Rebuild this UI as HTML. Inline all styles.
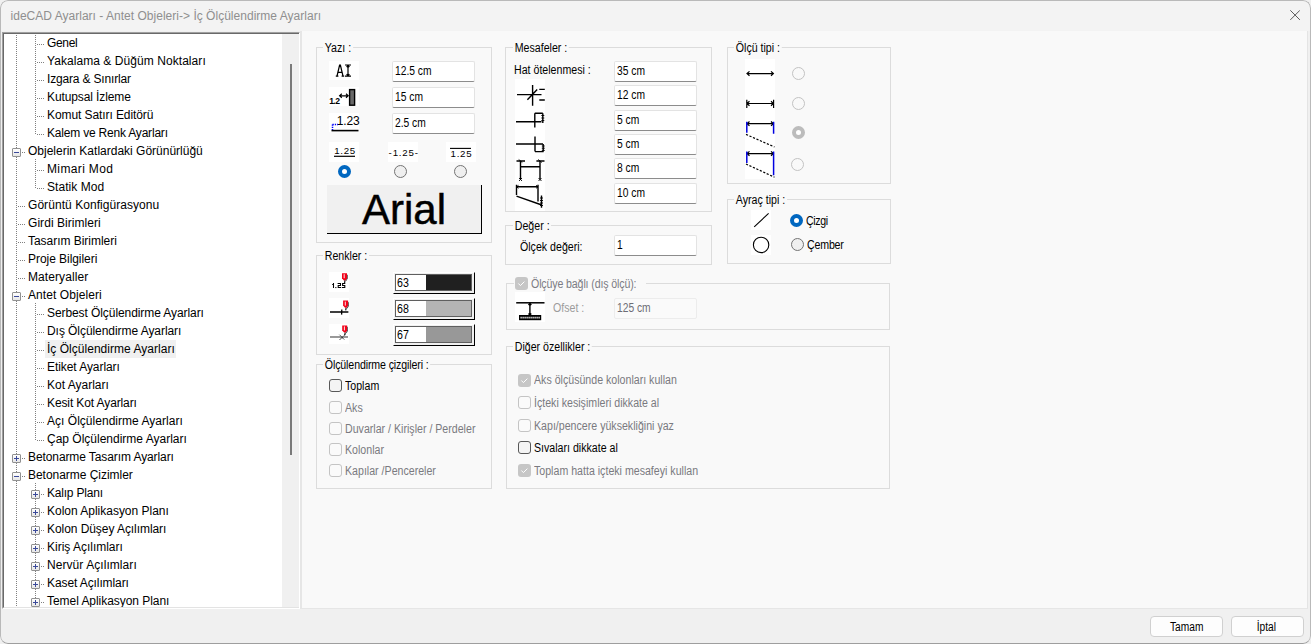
<!DOCTYPE html>
<html><head><meta charset="utf-8"><title>ideCAD</title>
<style>
*{box-sizing:border-box;margin:0;padding:0}
html,body{width:1311px;height:644px;overflow:hidden;background:#f0f0f0}
body{font-family:"Liberation Sans",sans-serif;font-size:11px;color:#000;position:relative}
#win{position:absolute;left:0;top:0;width:1311px;height:644px;background:#f0f0f0;border-radius:8px;overflow:hidden}
#win:after{content:"";position:absolute;left:0;top:0;right:0;bottom:0;border:1px solid #b9b9b9;border-bottom-color:#9e9e9e;border-radius:8px;pointer-events:none}
#tbar{position:absolute;left:0;top:0;width:1311px;height:31px;background:#f3f3f3}
#title{position:absolute;left:10.5px;top:9px;font-size:12px;color:#8f8f8f;white-space:nowrap;letter-spacing:0.02px}
#treeo{position:absolute;left:2px;top:32px;width:298px;height:577px;border-left:1px solid #a0a0a0;border-top:1px solid #a0a0a0;border-right:1px solid #fff;border-bottom:1px solid #fff}
#tree{position:absolute;left:0;top:0;width:296px;height:575px;background:#fff;border-left:1px solid #696969;border-top:1px solid #696969;border-right:0;border-bottom:1px solid #e3e3e3;overflow:hidden}
#treein{position:absolute;left:-4px;top:-34px;width:300px;height:640px}
.ti{position:absolute;height:18px;line-height:18px;font-size:12px;white-space:nowrap;color:#000;padding:0 1px 0 2px;margin-left:-2px}
.ti.sel{background:#f0f0f0}
.hd{position:absolute;height:1px;background-image:linear-gradient(90deg,#808080 50%,transparent 50%);background-size:2px 1px}
.vd{position:absolute;width:1px;background-image:linear-gradient(180deg,#808080 50%,transparent 50%);background-size:1px 2px}
.eb{position:absolute;width:9px;height:9px;border:1px solid #919191;border-radius:1px;background:linear-gradient(#fff,#e6e6e6)}
.eb .h{position:absolute;left:1px;top:3px;width:5px;height:1px;background:#3b4a9a}
.eb .v{position:absolute;left:3px;top:1px;width:1px;height:5px;background:#3b4a9a}
#sb{position:absolute;left:282px;top:34px;width:17px;height:574px;background:#f0f0f0}
#thumb{position:absolute;left:290px;top:64px;width:2px;height:391px;background:#7a7a7a}
#panel{position:absolute;left:300px;top:31px;width:1008px;height:578px;background:#f9f9f9;border-left:2px solid #e6e6e6;border-right:1px solid #e4e4e4;border-bottom:1px solid #e6e6e6}
.gb{position:absolute;border:1px solid #dcdcdc}
.gl{position:absolute;background:#f9f9f9;padding:0 2px;height:13px;line-height:13px;white-space:nowrap;font-size:12px;transform:scaleX(.885);transform-origin:0 50%}
.t{position:absolute;white-space:nowrap;font-size:12px;line-height:13px;transform:scaleX(.885);transform-origin:0 50%}
.dis{color:#7a7a80}
.in{position:absolute;height:21px;background:#fff;border:1px solid #e3e3e3;border-bottom:1px solid #8c8c8c;border-radius:2px;font-size:12px;line-height:18px;padding-left:2px;white-space:nowrap}
.in span{display:inline-block;transform:scaleX(.855);transform-origin:0 50%}
.in.d{background:#fafafa;border:1px solid #ececec;color:#6d6d75}
.ic{position:absolute;background:#fff}
.rb{position:absolute;width:13px;height:13px;border-radius:50%;border:1px solid #747474;background:#efefef}
.rb.on{border:4px solid #0067c0;background:#fff}
.rb.d{border-color:#c3c3c3;background:#f9f9f9}
.rb.don{border:4px solid #bcbcbc;background:#fff}
.cb{position:absolute;width:13px;height:13px;border-radius:3px;border:1px solid #585858;background:#f4f4f4}
.cb.d{border-color:#c4c4c4;background:#fafafa}
.cb.dc{border:none;background:#c6c6c6}
.cw{position:absolute;width:82px;height:22px;background:#f0f0f0;border-top:1px solid #fff;border-left:1px solid #fff;border-right:1px solid #000;border-bottom:1px solid #000}
.ci{position:absolute;left:1px;top:1px;width:77px;height:17px;border:1px solid #5f5f5f;background:#fff;font-size:12px;line-height:16px;padding-left:1px;white-space:nowrap}
.ci span{display:inline-block;transform:scaleX(.885);transform-origin:0 50%}
.ci i{position:absolute;left:30px;top:0;width:45px;height:15px}
.btn{position:absolute;height:21px;background:#fdfdfd;border:1px solid #d0d0d0;border-radius:4px;text-align:center;font-size:12px;line-height:20px}
.btn span{display:inline-block;transform:scaleX(.85)}
</style></head><body><div id="win">
<div id="tbar"></div>
<div id="title">ideCAD Ayarları - Antet Objeleri-&gt; İç Ölçülendirme Ayarları</div>
<svg style="position:absolute;left:1290px;top:10px" width="10" height="10" viewBox="0 0 10 10"><path d="M0.3 0.3L9.9 9.9M9.9 0.3L0.3 9.9" stroke="#5a5a5a" stroke-width="1" fill="none"/></svg>
<div id="treeo"><div id="tree"><div id="treein">
<div class="vd" style="left:16px;top:35px;height:573px"></div>
<div class="vd" style="left:35px;top:35px;height:100px"></div>
<div class="vd" style="left:35px;top:159px;height:30px"></div>
<div class="vd" style="left:35px;top:303px;height:138px"></div>
<div class="vd" style="left:35px;top:483px;height:125px"></div>
<div id="sb"></div><div id="thumb"></div>
<div class="ti" style="left:47px;top:34px;letter-spacing:-0.346px">Genel</div>
<div class="hd" style="left:37px;top:44px;width:8px"></div>
<div class="ti" style="left:47px;top:52px;letter-spacing:0.062px">Yakalama & Düğüm Noktaları</div>
<div class="hd" style="left:37px;top:62px;width:8px"></div>
<div class="ti" style="left:47px;top:70px;letter-spacing:-0.171px">Izgara & Sınırlar</div>
<div class="hd" style="left:37px;top:80px;width:8px"></div>
<div class="ti" style="left:47px;top:88px;letter-spacing:-0.106px">Kutupsal İzleme</div>
<div class="hd" style="left:37px;top:98px;width:8px"></div>
<div class="ti" style="left:47px;top:106px;letter-spacing:-0.087px">Komut Satırı Editörü</div>
<div class="hd" style="left:37px;top:116px;width:8px"></div>
<div class="ti" style="left:47px;top:124px;letter-spacing:-0.199px">Kalem ve Renk Ayarları</div>
<div class="hd" style="left:37px;top:134px;width:8px"></div>
<div class="ti" style="left:28px;top:142px;letter-spacing:0.001px">Objelerin Katlardaki Görünürlüğü</div>
<div class="hd" style="left:18px;top:152px;width:8px"></div>
<div class="eb" style="left:12px;top:148px"><i class="h"></i></div>
<div class="ti" style="left:47px;top:160px;letter-spacing:0.363px">Mimari Mod</div>
<div class="hd" style="left:37px;top:170px;width:8px"></div>
<div class="ti" style="left:47px;top:178px;letter-spacing:0.06px">Statik Mod</div>
<div class="hd" style="left:37px;top:188px;width:8px"></div>
<div class="ti" style="left:28px;top:196px;letter-spacing:0.055px">Görüntü Konfigürasyonu</div>
<div class="hd" style="left:18px;top:206px;width:8px"></div>
<div class="ti" style="left:28px;top:214px;letter-spacing:0.053px">Girdi Birimleri</div>
<div class="hd" style="left:18px;top:224px;width:8px"></div>
<div class="ti" style="left:28px;top:232px;letter-spacing:-0.032px">Tasarım Birimleri</div>
<div class="hd" style="left:18px;top:242px;width:8px"></div>
<div class="ti" style="left:28px;top:250px;letter-spacing:-0.049px">Proje Bilgileri</div>
<div class="hd" style="left:18px;top:260px;width:8px"></div>
<div class="ti" style="left:28px;top:268px;letter-spacing:0.086px">Materyaller</div>
<div class="hd" style="left:18px;top:278px;width:8px"></div>
<div class="ti" style="left:28px;top:286px;letter-spacing:0.078px">Antet Objeleri</div>
<div class="hd" style="left:18px;top:296px;width:8px"></div>
<div class="eb" style="left:12px;top:292px"><i class="h"></i></div>
<div class="ti" style="left:47px;top:304px;letter-spacing:-0.082px">Serbest Ölçülendirme Ayarları</div>
<div class="hd" style="left:37px;top:314px;width:8px"></div>
<div class="ti" style="left:47px;top:322px;letter-spacing:-0.061px">Dış Ölçülendirme Ayarları</div>
<div class="hd" style="left:37px;top:332px;width:8px"></div>
<div class="ti sel" style="left:47px;top:340px;letter-spacing:0.026px">İç Ölçülendirme Ayarları</div>
<div class="hd" style="left:37px;top:350px;width:8px"></div>
<div class="ti" style="left:47px;top:358px;letter-spacing:-0.068px">Etiket Ayarları</div>
<div class="hd" style="left:37px;top:368px;width:8px"></div>
<div class="ti" style="left:47px;top:376px;letter-spacing:-0.001px">Kot Ayarları</div>
<div class="hd" style="left:37px;top:386px;width:8px"></div>
<div class="ti" style="left:47px;top:394px;letter-spacing:-0.113px">Kesit Kot Ayarları</div>
<div class="hd" style="left:37px;top:404px;width:8px"></div>
<div class="ti" style="left:47px;top:412px;letter-spacing:0.025px">Açı Ölçülendirme Ayarları</div>
<div class="hd" style="left:37px;top:422px;width:8px"></div>
<div class="ti" style="left:47px;top:430px;letter-spacing:-0.002px">Çap Ölçülendirme Ayarları</div>
<div class="hd" style="left:37px;top:440px;width:8px"></div>
<div class="ti" style="left:28px;top:448px;letter-spacing:-0.096px">Betonarme Tasarım Ayarları</div>
<div class="hd" style="left:18px;top:458px;width:8px"></div>
<div class="eb" style="left:12px;top:454px"><i class="h"></i><i class="v"></i></div>
<div class="ti" style="left:28px;top:466px;letter-spacing:-0.032px">Betonarme Çizimler</div>
<div class="hd" style="left:18px;top:476px;width:8px"></div>
<div class="eb" style="left:12px;top:472px"><i class="h"></i></div>
<div class="ti" style="left:47px;top:484px;letter-spacing:-0.204px">Kalıp Planı</div>
<div class="hd" style="left:37px;top:494px;width:8px"></div>
<div class="eb" style="left:31px;top:490px"><i class="h"></i><i class="v"></i></div>
<div class="ti" style="left:47px;top:502px;letter-spacing:-0.013px">Kolon Aplikasyon Planı</div>
<div class="hd" style="left:37px;top:512px;width:8px"></div>
<div class="eb" style="left:31px;top:508px"><i class="h"></i><i class="v"></i></div>
<div class="ti" style="left:47px;top:520px;letter-spacing:-0.064px">Kolon Düşey Açılımları</div>
<div class="hd" style="left:37px;top:530px;width:8px"></div>
<div class="eb" style="left:31px;top:526px"><i class="h"></i><i class="v"></i></div>
<div class="ti" style="left:47px;top:538px;letter-spacing:-0.013px">Kiriş Açılımları</div>
<div class="hd" style="left:37px;top:548px;width:8px"></div>
<div class="eb" style="left:31px;top:544px"><i class="h"></i><i class="v"></i></div>
<div class="ti" style="left:47px;top:556px;letter-spacing:0.065px">Nervür Açılımları</div>
<div class="hd" style="left:37px;top:566px;width:8px"></div>
<div class="eb" style="left:31px;top:562px"><i class="h"></i><i class="v"></i></div>
<div class="ti" style="left:47px;top:574px;letter-spacing:-0.098px">Kaset Açılımları</div>
<div class="hd" style="left:37px;top:584px;width:8px"></div>
<div class="eb" style="left:31px;top:580px"><i class="h"></i><i class="v"></i></div>
<div class="ti" style="left:47px;top:592px;letter-spacing:-0.05px">Temel Aplikasyon Planı</div>
<div class="hd" style="left:37px;top:602px;width:8px"></div>
<div class="eb" style="left:31px;top:598px"><i class="h"></i><i class="v"></i></div></div></div></div>
<div id="panel"></div>
<!-- Yazi -->
<div class="gb" style="left:316px;top:47px;width:176px;height:196px"></div>
<div class="gl" style="left:323px;top:42px">Yazı :</div>
<div class="ic" style="left:329px;top:61px;width:30px;height:19px"></div>
<div class="ic" style="left:329px;top:87px;width:30px;height:19px"></div>
<div class="ic" style="left:329px;top:113px;width:30px;height:19px"></div>
<div class="in" style="left:392px;top:61px;width:83px"><span>12.5 cm</span></div>
<div class="in" style="left:392px;top:87px;width:83px"><span>15 cm</span></div>
<div class="in" style="left:392px;top:113px;width:83px"><span>2.5 cm</span></div>
<div class="ic" style="left:329px;top:142px;width:30px;height:20px"></div>
<div class="ic" style="left:388px;top:142px;width:30px;height:20px"></div>
<div class="ic" style="left:446px;top:142px;width:30px;height:20px"></div>
<div class="rb on" style="left:338px;top:165px"></div>
<div class="rb" style="left:394px;top:165px"></div>
<div class="rb" style="left:454px;top:165px"></div>
<div style="position:absolute;left:327px;top:185px;width:155px;height:49px;background:#f0f0f0;border-right:1px solid #000;border-bottom:1px solid #000;text-align:center;font-size:42px;line-height:49px;padding-right:0px;-webkit-text-stroke:0.45px #000">Arial</div>
<!-- Renkler -->
<div class="gb" style="left:316px;top:255px;width:176px;height:100px"></div>
<div class="gl" style="left:323px;top:250px">Renkler :</div>
<div class="ic" style="left:329px;top:272px;width:20px;height:20px"></div>
<div class="ic" style="left:329px;top:298px;width:20px;height:20px"></div>
<div class="ic" style="left:329px;top:324px;width:20px;height:20px"></div>
<div class="cw" style="left:393px;top:272px"><div class="ci"><span>63</span><i style="background:#202020"></i></div></div>
<div class="cw" style="left:393px;top:298px"><div class="ci"><span>68</span><i style="background:#b4b4b4"></i></div></div>
<div class="cw" style="left:393px;top:324px"><div class="ci"><span>67</span><i style="background:#989898"></i></div></div>
<!-- Olculendirme cizgileri -->
<div class="gb" style="left:316px;top:364px;width:176px;height:125px"></div>
<div class="gl" style="left:323px;top:359px;letter-spacing:-0.14px">Ölçülendirme çizgileri :</div>
<div class="cb" style="left:329px;top:379px"></div><div class="t" style="left:345px;top:380px">Toplam</div>
<div class="cb d" style="left:329px;top:401px"></div><div class="t dis" style="left:345px;top:402px">Aks</div>
<div class="cb d" style="left:329px;top:422px"></div><div class="t dis" style="left:345px;top:423px">Duvarlar / Kirişler / Perdeler</div>
<div class="cb d" style="left:329px;top:443px"></div><div class="t dis" style="left:345px;top:444px">Kolonlar</div>
<div class="cb d" style="left:329px;top:464px"></div><div class="t dis" style="left:345px;top:465px">Kapılar /Pencereler</div>
<!-- Mesafeler -->
<div class="gb" style="left:505px;top:47px;width:207px;height:165px"></div>
<div class="gl" style="left:513px;top:42px">Mesafeler :</div>
<div class="t" style="left:514px;top:64px">Hat ötelenmesi :</div>
<div class="in" style="left:614px;top:61px;width:83px"><span>35 cm</span></div>
<div class="in" style="left:614px;top:85px;width:83px"><span>12 cm</span></div>
<div class="in" style="left:614px;top:110px;width:83px"><span>5 cm</span></div>
<div class="in" style="left:614px;top:134px;width:83px"><span>5 cm</span></div>
<div class="in" style="left:614px;top:158px;width:83px"><span>8 cm</span></div>
<div class="in" style="left:614px;top:183px;width:83px"><span>10 cm</span></div>
<div class="ic" style="left:515px;top:79px;width:30px;height:132px"></div>
<!-- Deger -->
<div class="gb" style="left:505px;top:225px;width:207px;height:40px"></div>
<div class="gl" style="left:513px;top:220px">Değer :</div>
<div class="t" style="left:520px;top:241px">Ölçek değeri:</div>
<div class="in" style="left:614px;top:235px;width:83px"><span>1</span></div>
<!-- Olcuye bagli -->
<div class="gb" style="left:506px;top:283px;width:384px;height:47px"></div>
<div style="position:absolute;left:514px;top:280px;width:132px;height:8px;background:#f9f9f9"></div><div class="t dis" style="left:531px;top:278px;color:#7c7c84;letter-spacing:-0.15px">Ölçüye bağlı (dış ölçü):</div>
<div class="cb dc" style="left:515px;top:277px"></div>
<div class="ic" style="left:515px;top:292px;width:30px;height:30px"></div>
<div class="t dis" style="left:553px;top:302px;color:#9c9c9c">Ofset :</div>
<div class="in d" style="left:614px;top:298px;width:83px"><span>125 cm</span></div>
<!-- Diger ozellikler -->
<div class="gb" style="left:506px;top:346px;width:384px;height:143px"></div>
<div class="gl" style="left:513px;top:341px">Diğer özellikler :</div>
<div class="cb dc" style="left:518px;top:374px"></div><div class="t dis" style="left:534px;top:374px">Aks ölçüsünde kolonları kullan</div>
<div class="cb d" style="left:518px;top:396px"></div><div class="t dis" style="left:534px;top:397px">İçteki kesişimleri dikkate al</div>
<div class="cb d" style="left:518px;top:419px"></div><div class="t dis" style="left:534px;top:420px">Kapı/pencere yüksekliğini yaz</div>
<div class="cb" style="left:518px;top:441px"></div><div class="t" style="left:534px;top:442px">Sıvaları dikkate al</div>
<div class="cb dc" style="left:518px;top:464px"></div><div class="t dis" style="left:534px;top:465px">Toplam hatta içteki mesafeyi kullan</div>
<!-- Olcu tipi -->
<div class="gb" style="left:727px;top:47px;width:164px;height:137px"></div>
<div class="gl" style="left:734px;top:42px">Ölçü tipi :</div>
<div class="ic" style="left:745px;top:59px;width:30px;height:120px"></div>
<div class="rb d" style="left:792px;top:67px"></div>
<div class="rb d" style="left:792px;top:97px"></div>
<div class="rb don" style="left:792px;top:126px"></div>
<div class="rb d" style="left:791px;top:158px"></div>
<!-- Ayrac tipi -->
<div class="gb" style="left:727px;top:199px;width:164px;height:65px"></div>
<div class="gl" style="left:734px;top:194px">Ayraç tipi :</div>
<div class="ic" style="left:751px;top:210px;width:20px;height:20px"></div><div class="ic" style="left:751px;top:235px;width:20px;height:20px"></div>
<div class="rb on" style="left:790px;top:214px"></div><div class="t" style="left:806px;top:215px;letter-spacing:-0.4px">Çizgi</div>
<div class="rb" style="left:791px;top:238px"></div><div class="t" style="left:807px;top:239px;letter-spacing:-0.2px">Çember</div>
<svg style="position:absolute;left:0;top:0" width="1311" height="644" viewBox="0 0 1311 644" fill="none" stroke="#000" stroke-width="1.2" font-family="Liberation Sans, sans-serif">
<defs>
<pattern id="hat" width="2" height="2" patternUnits="userSpaceOnUse"><rect width="2" height="2" fill="#000"/><rect width="1" height="1" fill="#fff"/><rect x="1" y="1" width="1" height="1" fill="#fff"/></pattern>
<g id="pin" stroke="none"><path d="M0.2 0H5.2V5L3.9 7.2H2.1L0.2 5Z" fill="#f20018"/><rect x="1.9" y="1" width="0.9" height="4" fill="#fff"/><path d="M5.2 1.2L6 1.8V5.4L4.5 7.8L3.9 7.2L5.2 5Z" fill="#4a4a4a"/><path d="M3.2 7.2L2.8 9.8" stroke="#000" stroke-width="1.1"/></g>
</defs>
<!-- Yazi icon 1: A I-beam -->
<g stroke-width="1.25">
<path d="M337 76.2L339.6 65H340.4L343 76.2M338 72.4H342M335.8 76.2H338.4M341.6 76.2H344.2"/>
<path d="M348 65V76M345 65H351M345 76.2H351M346.6 67L348 65.4L349.4 67M346.6 74.2L348 75.8L349.4 74.2" stroke-width="1.2"/>
</g>
<!-- Yazi icon 2 -->
<g font-size="8.6" font-weight="bold" fill="#000" stroke="none"><text x="329.3" y="104.4">1</text><text x="333.3" y="104.4">.</text><text x="335.2" y="104.4">2</text></g>
<path d="M339.6 95.8H348.2M341.8 93.8L339.6 95.8L341.8 97.8M346 93.8L348.2 95.8L346 97.8" stroke-width="1.15"/>
<rect x="349.6" y="89.6" width="5" height="15.6" fill="#6a6a6a" stroke="#000" stroke-width="1.4"/>
<!-- Yazi icon 3 -->
<text x="336.8" y="125" font-size="12" fill="#000" stroke="none" letter-spacing="-0.2">1.23</text>
<path d="M331.5 130.6H358.5" stroke-width="1.6"/>
<path d="M332.5 124.5H338M332.5 124.5V130" stroke="#0000ff" stroke-width="1.5" stroke-dasharray="1.3 1"/>
<!-- 1.25 labels -->
<text transform="translate(334.2 154)" font-size="9.7" fill="#000" stroke="none" letter-spacing="0.7">1.25</text>
<path d="M334 156.3H355" stroke-width="1.2"/>
<text transform="translate(388.6 156)" font-size="9.7" fill="#000" stroke="none" letter-spacing="0.8">-1.25-</text>
<text transform="translate(450.6 157)" font-size="9.7" fill="#000" stroke="none" letter-spacing="0.7">1.25</text>
<path d="M450 148.4H471" stroke-width="1.1"/>
<!-- Renkler icons -->
<use href="#pin" x="341.8" y="273.2"/>
<path d="M333.5 283V288M332.2 284.5H333.5M337.6 283.5H340.5V285.5H338.2V287.5H341.2M345.3 283.5H342.6V285.5H344.8V287.5H342" stroke-width="1.05"/>
<rect x="335.3" y="287" width="1.1" height="1.1" fill="#000" stroke="none"/>
<use href="#pin" x="342.9" y="300.6"/>
<path d="M330 312H348.4M341.8 309.4L341.6 314.6" stroke-width="1.3"/>
<use href="#pin" x="342" y="325.4"/>
<path d="M330 337.4l1-.8 1 .8 1-.8 1 .8 1-.8 1 .8 1-.8 1 .8 1-.8 1 .8 1-.8 1 .8 1-.8 1 .8 1-.8 1 .8 1-.8 1 .8" stroke-width="0.8"/>
<path d="M339.5 340L345 334.5M339.5 334.8L344.6 339.9" stroke-width="1" stroke-dasharray="1 0.7"/>
<!-- Mesafeler icons -->
<g stroke-width="1.4">
<path d="M517 94.6H541.5M532.6 85V105.7M527.4 99.7L537.2 89.4M539.3 89.4H544.8M539.3 100H544.8"/>
<path d="M516 121.8H541.5M534.8 113.3V127.5M534.8 113.3H542.8M542.8 113.3V123"/>
<path d="M541.3 115.5H544.3M541.3 118H544.3M541.3 120.5H544.3" stroke-width="0.9"/>
<path d="M516 144H543M535 136.4V151.6M535 151.6H543.6M543.2 144V151.6"/>
<path d="M541.8 146H544.8M541.8 148.2H544.8M541.8 150.4H544.8" stroke-width="0.9"/>
<path d="M520.5 161V179.4M540 161V179.4M516.5 161H525M536.4 161H544.5M520.5 166.8H540"/>
<path d="M518.7 159.5L522.3 162.5M538.2 159.5L541.8 162.5M519 178L522 181M522 178L519 181M538.5 178L541.5 181M541.5 178L538.5 181" stroke-width="0.9"/>
<path d="M516.5 186.8H538M516.5 184.8V195M538 184.8V201.6M516.5 196.2L541.8 205M541.5 195.6V207.7"/>
<path d="M518.5 185.3L516.5 186.8L518.5 188.3M536 185.3L538 186.8L536 188.3M540 198H543M540 200.5H543M540 203H543M540 205.5H543" stroke-width="0.9"/>
</g>
<!-- Olcuye bagli icon -->
<path d="M516.2 302.8H544.5" stroke-width="1.5"/>
<path d="M529.9 303V315.3M528.5 305L529.9 303.3L531.3 305M528.5 313.5L529.9 315L531.3 313.5" stroke-width="1.4"/>
<rect x="519" y="315" width="22.2" height="5.2" fill="#000" stroke="none"/>
<path d="M520.5 317.6H540" stroke="#fff" stroke-width="1.6" stroke-dasharray="1.2 0.8"/>
<!-- Olcu tipi icons -->
<g stroke-width="1.2">
<path d="M747 73.6H773.4M749.5 71.4L747 73.6L749.5 75.8M771 71.4L773.4 73.6L771 75.8"/>
<path d="M747 103.5H773.4M749.5 101.3L747 103.5L749.5 105.7M771 101.3L773.4 103.5L771 105.7M746.8 99.8V108M773.6 99.8V108"/>
<path d="M747 123.7H773.4M749.5 121.5L747 123.7L749.5 125.9M771 121.5L773.4 123.7L771 125.9"/>
<path d="M746.8 121.7V132.8M773.6 121.7V133.8" stroke="#0000e0" stroke-width="1.5"/>
<path d="M746 134.4L774.5 147" stroke-dasharray="2.2 1.6"/>
<path d="M747 153.6H773.4M749.5 151.4L747 153.6L749.5 155.8M771 151.4L773.4 153.6L771 155.8"/>
<path d="M746.8 151.6V163M773.6 151.6V175.2" stroke="#0000e0" stroke-width="1.5"/>
<path d="M746 164L774.5 177.2" stroke-dasharray="2.2 1.6"/>
</g>
<path d="M518.4 283.5L520.4 285.6L524.4 281.6" stroke="#fff" stroke-width="1"/>
<path d="M521.4 380.5L523.4 382.6L527.4 378.6" stroke="#fff" stroke-width="1"/>
<path d="M521.4 470.5L523.4 472.6L527.4 468.6" stroke="#fff" stroke-width="1"/>
<!-- Ayrac icons -->
<path d="M754.2 226.8L768.6 213.4" stroke-width="1.1"/>
<circle cx="761.1" cy="244.9" r="7.7" stroke-width="1.1"/>
</svg>

<!-- buttons -->
<div class="btn" style="left:1150px;top:616px;width:73px"><span>Tamam</span></div>
<div class="btn" style="left:1231px;top:616px;width:73px"><span style="position:relative;left:-1px">İptal</span></div>
</div></body></html>
